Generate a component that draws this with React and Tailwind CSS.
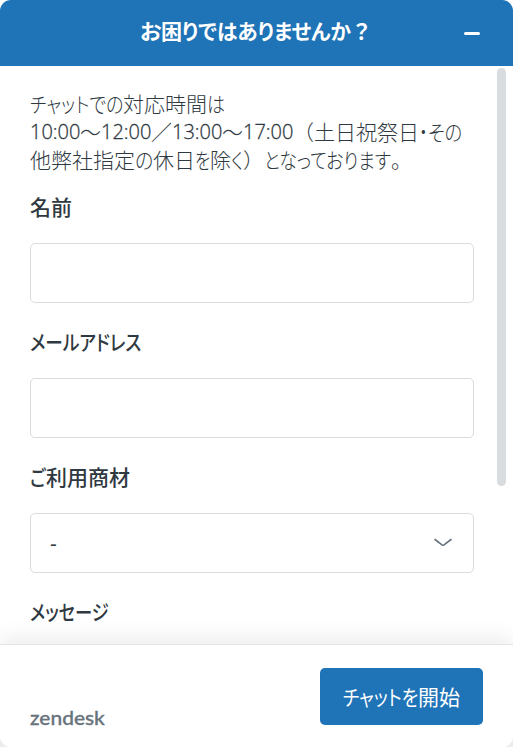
import { useLayoutEffect, useRef, useState } from 'react';

// Proportional kana run: natural width is squeezed into the width of its box
function Kana({ className, children }) {
  const box = useRef(null);
  const inner = useRef(null);
  const [scale, setScale] = useState(1);

  useLayoutEffect(() => {
    setScale(box.current.clientWidth / inner.current.offsetWidth);
  }, []);

  return (
    <span ref={box} className={`inline-block whitespace-nowrap ${className}`}>
      <span
        ref={inner}
        className="inline-block origin-left [font-feature-settings:'palt']"
        style={{ transform: `scaleX(${scale})` }}
      >
        {children}
      </span>
    </span>
  );
}

function Time({ children }) {
  return (
    <Kana className="w-[50px] pt-px font-['Open_Sans'] text-[20px] font-[360] [-webkit-text-stroke:0.3px_#2f3941]">
      {children}
    </Kana>
  );
}

function Field({ label, children }) {
  return (
    <div className="mb-[25px]">
      <div className="mb-[25px] flex h-[25px] items-center font-medium">{label}</div>
      <div className="flex h-[60px] items-center justify-between rounded-[5px] border border-[#d8dcde] bg-white pr-[21px] pl-[19px]">
        {children}
      </div>
    </div>
  );
}

export default function App() {
  return (
    <div className="h-[747px] w-[513px] overflow-hidden bg-[linear-gradient(#fff_50%,#ececec_50%)] font-['Noto_Sans','Noto_Sans_CJK_JP',sans-serif] text-[21px] leading-7 text-[#2f3941]">
      <div className="flex h-full flex-col overflow-hidden rounded-[11px] bg-white">
        <header className="relative flex h-[66px] shrink-0 items-center bg-[#1f73b7] pb-[6px] pl-[140px] font-['Noto_Sans_CJK_JP',sans-serif] font-bold text-white">
          <Kana className="w-[21px]">お</Kana>
          <span>困</span>
          <Kana className="w-[169px]">りではありませんか</Kana>
          <span>？</span>
          <span className="absolute top-[32px] left-[464px] h-[3px] w-[16px] rounded-full bg-white" />
        </header>

        <main className="flex min-h-0 flex-1 justify-between overflow-hidden bg-white pr-[7px] pl-[30px]">
          <div className="w-[444px] pt-[23px] font-['Noto_Sans_CJK_JP',sans-serif]">
            <div className="mb-[20px] font-light whitespace-nowrap">
              <div className="flex h-7 items-center">
                <Kana className="w-[93px]">チャットでの</Kana>
                <span>対応時間</span>
                <Kana className="w-[18px]">は</Kana>
              </div>
              <div className="flex h-7 items-center">
                <Time>10:00</Time>
                <span>～</span>
                <Time>12:00</Time>
                <span>／</span>
                <Time>13:00</Time>
                <span>～</span>
                <Time>17:00</Time>
                <span>（土日祝祭日</span>
                <Kana className="w-[9px]">・</Kana>
                <Kana className="w-[34px]">その</Kana>
              </div>
              <div className="flex h-7 items-center">
                <span>他弊社指定</span>
                <Kana className="w-[18px]">の</Kana>
                <span>休日</span>
                <Kana className="w-[15px]">を</Kana>
                <span>除</span>
                <Kana className="w-[12px]">く</Kana>
                <span>）</span>
                <Kana className="w-[127px]">となっております</Kana>
                <span>。</span>
              </div>
            </div>

            <Field label={<span>名前</span>} />
            <Field label={<Kana className="w-[111px]">メールアドレス</Kana>} />
            <Field
              label={
                <>
                  <Kana className="w-[16px]">ご</Kana>
                  <span>利用商材</span>
                </>
              }
            >
              <span className="font-['Open_Sans']">-</span>
              <svg width="18" height="10" viewBox="0 0 18 10" fill="none" stroke="#68737d" strokeWidth="1.6" strokeLinecap="round">
                <path d="M1 1.5 8 6.9a1.7 1.7 0 0 0 2 0L17 1.5" />
              </svg>
            </Field>
            <Field label={<Kana className="w-[79px]">メッセージ</Kana>} />
          </div>
          <div className="mt-[2px] h-[418px] w-[9px] rounded-full bg-[#d8dcde]" />
        </main>

        <footer className="relative flex h-[103px] shrink-0 justify-between border-t border-[#e4e5e6] bg-white pr-[30px] pl-[30px] shadow-[0_-4px_22px_rgba(0,0,0,0.09)]">
          <div className="pt-[59px] font-['Lato'] text-[19px] font-medium text-[#68737d] [-webkit-text-stroke:0.3px_#68737d]">
            <Kana className="w-[75px]">zendesk</Kana>
          </div>
          <button className="mt-[23px] flex h-[57px] w-[163px] items-center justify-center rounded-[5px] bg-[#1f73b7] pb-[2px] font-['Noto_Sans_CJK_JP',sans-serif] font-normal text-white">
            <Kana className="w-[75px]">チャットを</Kana>
            <span>開始</span>
          </button>
        </footer>
      </div>
    </div>
  );
}
